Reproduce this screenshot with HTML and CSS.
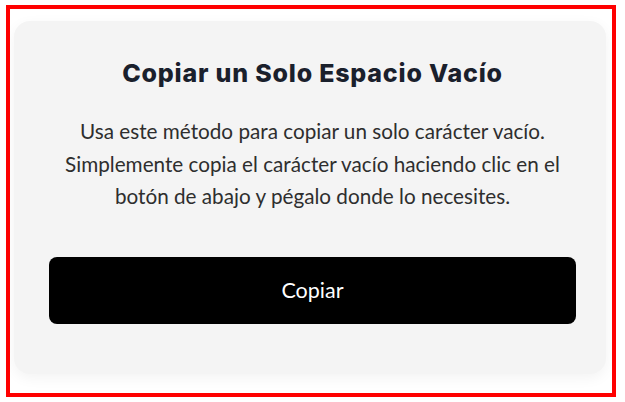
FILE: index.html
```html
<!DOCTYPE html>
<html lang="es">
<head>
<meta charset="utf-8">
<title>Copiar un Solo Espacio Vacío</title>
<link rel="stylesheet" href="styles.css">
</head>
<body>
<div class="frame">
  <section class="card">
    <h1 class="title">Copiar un Solo Espacio Vacío</h1>
    <p class="desc">Usa este método para copiar un solo carácter vacío. Simplemente copia el carácter vacío haciendo clic en el botón de abajo y pégalo donde lo necesites.</p>
    <button class="copy-btn" type="button">Copiar</button>
  </section>
</div>
</body>
</html>
```
FILE: styles.css
```css
html, body {
  margin: 0;
  padding: 0;
  background: #ffffff;
}
.frame {
  margin: 5px 9px 6px 6px;
  border: 4px solid #ff0000;
  padding: 12px 6px 19px 4px;
  background: #ffffff;
}
.card {
  background: #f4f4f4;
  border-radius: 16px;
  box-shadow: 0 4px 14px rgba(0, 0, 0, 0.05);
  padding: 34px 30px 50px 35px;
  display: flex;
  flex-direction: column;
  align-items: stretch;
  text-align: center;
}
.title {
  margin: 0;
  font-family: Inter, "Open Sans", sans-serif;
  font-weight: 800;
  font-size: 25px;
  line-height: 36px;
  color: #1a202c;
  letter-spacing: 0.8px;
}
.desc {
  margin: 24px 0 0 0;
  font-family: Lato, "Noto Sans", sans-serif;
  font-size: 20.7px;
  line-height: 32.5px;
  color: #2e2e2e;
}
.copy-btn {
  margin-top: 44px;
  height: 67px;
  border: none;
  border-radius: 8px;
  background: #000000;
  color: #ffffff;
  font-family: Lato, "Noto Sans", sans-serif;
  font-size: 21.5px;
  cursor: pointer;
}
```
